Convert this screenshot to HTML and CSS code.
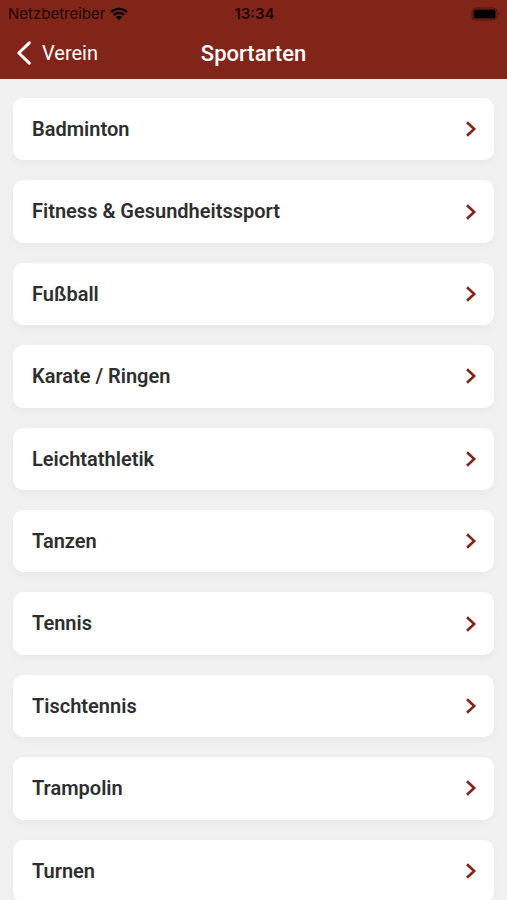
FILE: index.html
```html
<!DOCTYPE html>
<html lang="de">
<head>
<meta charset="utf-8">
<meta name="viewport" content="width=device-width, initial-scale=1">
<title>Sportarten</title>
<link rel="stylesheet" href="styles.css">
</head>
<body>
<svg class="defs" aria-hidden="true">
  <symbol id="chevron" viewBox="0 0 12 18"><path d="M2 2.2 L9.2 9 L2 15.8" fill="none" stroke="currentColor" stroke-width="2.6"/></symbol>
</svg>
<header class="header">
  <div class="status">
    <div class="carrier">
      <span>Netzbetreiber</span>
      <svg class="wifi" viewBox="0 0 18 14" aria-hidden="true">
        <path d="M1 5.2 A11.5 11.5 0 0 1 17 5.2 M3.8 8 A7.5 7.5 0 0 1 14.2 8" fill="none" stroke="currentColor" stroke-width="2.3"/>
        <path d="M9 13.2 L5.8 10 A4.6 4.6 0 0 1 12.2 10 Z" fill="currentColor"/>
      </svg>
    </div>
    <time class="time">13:34</time>
    <svg class="battery" viewBox="0 0 30 14" aria-hidden="true">
      <rect x="1" y="1" width="25" height="12" rx="3.5" fill="none" stroke="#5a150c"/>
      <rect x="2.5" y="2.5" width="22" height="9" rx="1.5" fill="#000"/>
      <path d="M27.5 5 Q29.5 7 27.5 9 Z" fill="#5a150c"/>
    </svg>
  </div>
  <nav class="bar">
    <a class="back" href="#verein">
      <svg class="back-icon" viewBox="0 0 16 26" aria-hidden="true"><path d="M13.3 2.8 L2.8 13 L13.3 23.2" fill="none" stroke="currentColor" stroke-width="3" stroke-linecap="round" stroke-linejoin="round"/></svg>
      <span>Verein</span>
    </a>
    <h1 class="title">Sportarten</h1>
  </nav>
</header>
<main>
  <ul class="list">
    <li><a class="card" href="#badminton">Badminton<svg class="arrow" aria-hidden="true"><use href="#chevron"/></svg></a></li>
    <li><a class="card" href="#fitness">Fitness &amp; Gesundheitssport<svg class="arrow" aria-hidden="true"><use href="#chevron"/></svg></a></li>
    <li><a class="card" href="#fussball">Fußball<svg class="arrow" aria-hidden="true"><use href="#chevron"/></svg></a></li>
    <li><a class="card" href="#karate">Karate / Ringen<svg class="arrow" aria-hidden="true"><use href="#chevron"/></svg></a></li>
    <li><a class="card" href="#leichtathletik">Leichtathletik<svg class="arrow" aria-hidden="true"><use href="#chevron"/></svg></a></li>
    <li><a class="card" href="#tanzen">Tanzen<svg class="arrow" aria-hidden="true"><use href="#chevron"/></svg></a></li>
    <li><a class="card" href="#tennis">Tennis<svg class="arrow" aria-hidden="true"><use href="#chevron"/></svg></a></li>
    <li><a class="card" href="#tischtennis">Tischtennis<svg class="arrow" aria-hidden="true"><use href="#chevron"/></svg></a></li>
    <li><a class="card" href="#trampolin">Trampolin<svg class="arrow" aria-hidden="true"><use href="#chevron"/></svg></a></li>
    <li><a class="card" href="#turnen">Turnen<svg class="arrow" aria-hidden="true"><use href="#chevron"/></svg></a></li>
  </ul>
</main>
</body>
</html>
```
FILE: styles.css
```css
* {
  box-sizing: border-box;
}

html {
  scrollbar-width: none;
}

body {
  margin: 0;
  background: #f1f1f1;
  color: #2e2e2e;
  font-family: Roboto, "Liberation Sans", sans-serif;
}

a {
  color: inherit;
  text-decoration: none;
}

svg {
  display: block;
}

.defs {
  display: none;
}

.header {
  position: sticky;
  top: 0;
  z-index: 1;
  background: #822519;
  color: #fff;
}

.status {
  display: grid;
  grid-template-columns: 1fr auto 1fr;
  align-items: center;
  height: 27px;
  padding: 0 6px 0 8px;
  color: #1f0503;
  font-family: Inter, "Liberation Sans", sans-serif;
  font-size: 15px;
}

.carrier {
  display: flex;
  align-items: center;
  gap: 5px;
}

.wifi {
  width: 18px;
  height: 14px;
  color: #000;
}

.time {
  font-weight: 600;
}

.battery {
  justify-self: end;
  width: 30px;
  height: 14px;
}

.bar {
  display: grid;
  grid-template-columns: 1fr auto 1fr;
  align-items: center;
  height: 52px;
  padding: 0 16px;
  font-size: 20px;
}

.back {
  display: flex;
  align-items: center;
  gap: 10px;
}

.back-icon {
  width: 16px;
  height: 26px;
}

.title {
  margin: 0;
  font-size: 22px;
  font-weight: 500;
}

.list {
  display: grid;
  gap: 20px;
  margin: 0;
  padding: 19px 13px;
  list-style: none;
}

.card {
  display: flex;
  align-items: center;
  justify-content: space-between;
  padding: 17px;
  padding-left: 19px;
  border-radius: 10px;
  background: #fff;
  box-shadow: 0 3px 8px rgba(0, 0, 0, 0.04);
  font-size: 20px;
  font-weight: 600;
  line-height: 1.42;
}

.arrow {
  width: 12px;
  height: 18px;
  color: #822519;
}
```
